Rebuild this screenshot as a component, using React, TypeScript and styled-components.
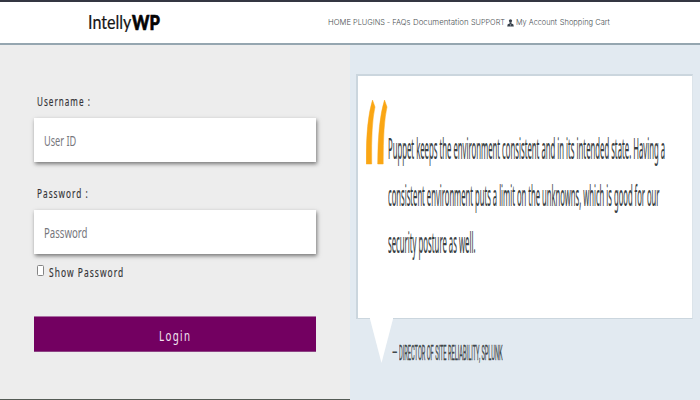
import React, { useLayoutEffect, useRef, useState } from "react";
import styled, { createGlobalStyle } from "styled-components";

const GlobalStyle = createGlobalStyle`
  *, *::before, *::after { box-sizing: border-box; }
  body { margin: 0; background: #fff; overflow: hidden; }
`;

type TextProps = {
  $size: number; $line: number; $color: string; $font?: string;
  $weight?: number; $spacing?: number; $stroke?: number;
};
const TextSlot = styled.span<{ $width: number; $line: number }>`
  display: block;
  flex: none;
  width: ${(p) => p.$width}px;
  height: ${(p) => p.$line}px;
`;
const TextRun = styled.span<TextProps>`
  display: inline-block;
  white-space: nowrap;
  transform-origin: left center;
  opacity: 0.98;
  vertical-align: top;
  font: ${(p) => p.$weight ?? 400} ${(p) => p.$size}px/${(p) => p.$line}px ${(p) => p.$font ?? '"Noto Sans"'}, sans-serif;
  letter-spacing: ${(p) => p.$spacing ?? 0}px;
  -webkit-text-stroke: ${(p) => p.$stroke ?? 0}px ${(p) => p.$color};
  color: ${(p) => p.$color};
`;

/* Condenses or widens a line of text so that it fills the given width. */
function FitText({ width, children, ...rest }: TextProps & { width: number; children: string }) {
  const ref = useRef<HTMLSpanElement>(null);
  const [scale, setScale] = useState(1);
  useLayoutEffect(() => {
    if (ref.current) setScale(width / (ref.current.offsetWidth - (rest.$spacing ?? 0)));
  }, [width, children]);
  return (
    <TextSlot $width={width} $line={rest.$line}>
      <TextRun ref={ref} {...rest} style={{ transform: `scaleX(${scale})` }}>{children}</TextRun>
    </TextSlot>
  );
}

const Page = styled.div`
  width: 700px;
  height: 400px;
  display: flex;
  flex-direction: column;
  overflow: hidden;
`;
const Header = styled.header`
  flex: none;
  height: 45px;
  display: flex;
  align-items: flex-start;
  border-top: 2px solid #343642;
  border-bottom: 2px solid #95a6b0;
  background: #fff;
`;
const Logo = styled.div`
  display: flex;
  width: 239.5px;
  margin: 8px 0 0 88px;
`;
const Nav = styled.nav`
  display: flex;
  gap: 2.6px;
  margin-top: 15px;
`;
const Main = styled.main`
  flex: 1;
  display: flex;
`;
const LoginPanel = styled.form`
  width: 350px;
  padding: 48px 34px 0;
  display: flex;
  flex-direction: column;
  background: #ededed;
  border-bottom: 1px solid #545b55;
`;
const Label = styled.label`
  display: block;
  height: 25px;
  padding-left: 2.5px;
`;
const Field = styled.div<{ $gap: number }>`
  height: 44px;
  flex: none;
  margin-bottom: ${(p) => p.$gap}px;
  padding: 13px 10px 0;
  background: #fff;
  box-shadow: 1px 2px 4px rgba(0, 0, 0, 0.5);
`;
const CheckRow = styled.label`
  display: flex;
  align-items: flex-start;
  gap: 5px;
  height: 52px;
  padding-left: 2.5px;
`;
const Checkbox = styled.span`
  width: 7.5px;
  height: 11px;
  margin-top: 1px;
  border: 1px solid #858585;
  border-radius: 1.5px;
  background: #fff;
`;
const LoginButton = styled.button`
  display: flex;
  justify-content: center;
  height: 36px;
  padding: 8px 2px 0 0;
  border: 0;
  border-top: 1px solid #ab6fa3;
  border-bottom: 1px solid #8d4384;
  background: #730061;
`;
const QuotePanel = styled.section`
  flex: 1;
  padding: 29px 7px 0 6px;
  background: #e2eaf1;
`;
const QuoteCard = styled.blockquote`
  display: flex;
  margin: 0;
  height: 245px;
  border: 1px solid #cbd6de;
  border-width: 2px 1px 1px 2px;
  border-right-color: #dce4ea;
  background: #fff;
`;
const QuoteMark = styled.svg`
  flex: none;
  width: 22px;
  height: 66px;
  margin: 23px 0 0 8px;
`;
const QuoteLines = styled.div`
  display: flex;
  flex-direction: column;
  padding-top: 48px;
`;
const Attribution = styled.footer`
  display: flex;
  align-items: flex-start;
  padding-left: 14px;
`;
const Tail = styled.svg`
  flex: none;
  width: 23px;
  height: 47px;
  margin-top: -2px;
`;
const Caption = styled.cite`
  display: flex;
  gap: 1.5px;
  font-style: normal;
  margin-top: 19px;
  margin-left: -1px;
`;
const Person = styled.svg`
  width: 7px;
  height: 8px;
  margin: 2px -0.5px 0 -0.5px;
`;

const navStyle = { $size: 7.5, $line: 12, $color: "#464c4f", $font: '"Inter"', $weight: 300 };
const labelStyle = { $size: 12, $line: 18, $color: "#303033", $spacing: 1.5, $stroke: 0.15 };
const hintStyle = { $size: 13.5, $line: 20, $color: "#74747a" };
const quoteStyle = { $size: 29, $line: 47, $color: "#343a3d", $stroke: 0.2 };
const captionStyle = { $size: 20, $line: 30, $color: "#3c4448", $font: "Roboto" };

export default function App() {
  return (
    <Page>
      <GlobalStyle />
      <Header>
        <Logo>
          <FitText width={43.5} $size={18.5} $line={25} $color="#111" $font="Lato" $stroke={0.2}>Intelly</FitText>
          <FitText width={28} $size={20} $line={24} $color="#000" $font="Lato" $weight={900} $stroke={0.7}>WP</FitText>
        </Logo>
        <Nav>
          <FitText width={22.5} {...navStyle}>HOME</FitText>
          <FitText width={31.5} {...navStyle}>PLUGINS</FitText>
          <FitText width={3} {...navStyle}>-</FitText>
          <FitText width={18} {...navStyle}>FAQs</FitText>
          <FitText width={55.5} {...navStyle}>Documentation</FitText>
          <FitText width={34} {...navStyle}>SUPPORT</FitText>
          <Person viewBox="0 0 7 8">
            <circle cx="3.5" cy="1.8" r="1.6" fill="#38404b" />
            <path d="M2.5 3.2h2v1.3l1.8.8.5 2.2H.2l.5-2.2 1.8-.8Z" fill="#38404b" />
            <path d="m2.5 4.7 1 .8 1-.8M3.5 5.5v2" stroke="#aeb8c2" strokeWidth=".5" fill="none" />
          </Person>
          <FitText width={41} {...navStyle}>My Account</FitText>
          <FitText width={50} {...navStyle}>Shopping Cart</FitText>
        </Nav>
      </Header>
      <Main>
        <LoginPanel>
          <Label><FitText width={53} {...labelStyle}>Username :</FitText></Label>
          <Field $gap={23}><FitText width={32} {...hintStyle}>User ID</FitText></Field>
          <Label><FitText width={51} {...labelStyle}>Password :</FitText></Label>
          <Field $gap={10}><FitText width={43.5} {...hintStyle}>Password</FitText></Field>
          <CheckRow>
            <Checkbox />
            <FitText width={74} {...labelStyle}>Show Password</FitText>
          </CheckRow>
          <LoginButton type="button">
            <FitText width={31} $size={14.5} $line={20} $color="#f5e8f3" $spacing={2}>Login</FitText>
          </LoginButton>
        </LoginPanel>
        <QuotePanel>
          <QuoteCard>
            <QuoteMark viewBox="0 0 22 66">
              <path d="M6.5 1 9 8Q5 25 5.7 65H.2Q-.1 22 6.5 1ZM18.5 1 21 8Q17 25 17.2 65H11.7Q11.8 22 18.5 1Z" fill="#faa614" stroke="#faa614" strokeWidth=".5" />
            </QuoteMark>
            <QuoteLines>
              <FitText width={277} {...quoteStyle}>Puppet keeps the environment consistent and in its intended state. Having a</FitText>
              <FitText width={271.5} {...quoteStyle}>consistent environment puts a limit on the unknowns, which is good for our</FitText>
              <FitText width={87.5} {...quoteStyle}>security posture as well.</FitText>
            </QuoteLines>
          </QuoteCard>
          <Attribution>
            <Tail viewBox="0 0 23 47"><path d="M0 0h23v2L11.5 46 0 2Z" fill="#fff" /></Tail>
            <Caption>
              <FitText width={5.5} {...captionStyle}>—</FitText>
              <FitText width={103.5} {...captionStyle} $stroke={0.3}>DIRECTOR OF SITE RELIABILITY, SPLUNK</FitText>
            </Caption>
          </Attribution>
        </QuotePanel>
      </Main>
    </Page>
  );
}
